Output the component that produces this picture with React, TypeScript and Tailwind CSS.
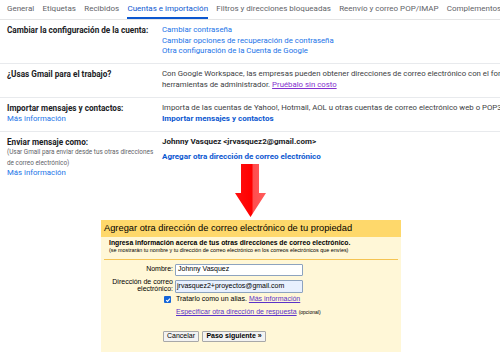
import * as React from 'react'

const tabs = [
  'General',
  'Etiquetas',
  'Recibidos',
  'Cuentas e importación',
  'Filtros y direcciones bloqueadas',
  'Reenvío y correo POP/IMAP',
  'Complementos',
]

function Row({ label, children }: { label: React.ReactNode; children: React.ReactNode }) {
  return (
    <div className="flex border-b border-[#e8eaed] pt-[5px] pb-[6.5px] leading-[10.6px]">
      <div className="w-[162px] shrink-0 pl-[7px]">{label}</div>
      <div className="min-w-0 flex-1 whitespace-nowrap">{children}</div>
    </div>
  )
}

function DownArrow() {
  return (
    <svg width="31" height="53" viewBox="0 0 31 53">
      <defs>
        <linearGradient id="arrowFill" x1="0" y1="0" x2="1" y2="0">
          <stop offset="0" stopColor="#ff1010" />
          <stop offset="0.55" stopColor="#ff0000" />
          <stop offset="0.58" stopColor="#ff4d4d" />
          <stop offset="1" stopColor="#ff5c5c" />
        </linearGradient>
      </defs>
      <path d="M6 0 H24 V29 H31 L15.5 53 L0 29 H6 Z" fill="url(#arrowFill)" />
    </svg>
  )
}

function CheckedBox() {
  return (
    <span className="flex h-[7px] w-[7px] items-center justify-center rounded-[1px] bg-[#1565d8]">
      <svg width="6" height="6" viewBox="0 0 10 10">
        <path d="M2 5.2 L4.2 7.4 L8.2 2.8" fill="none" stroke="#fff" strokeWidth="1.8" />
      </svg>
    </span>
  )
}

export default function App() {
  return (
    <div className="h-[360px] w-[500px] overflow-hidden bg-white">
      {/* gmail settings */}
      <div className="font-['Roboto',Arial,sans-serif] text-[7.8px] text-[#202124]">
        <div className="flex h-[20px] items-stretch gap-[8.3px] border-b border-[#e5e5e5] pl-[7px] whitespace-nowrap">
          {tabs.map((t) => (
            <div
              key={t}
              className={
                t === 'Cuentas e importación'
                  ? 'flex items-center border-b-2 border-[#0b57d0] pt-[1px] text-[8px] text-[#0b57d0]'
                  : 'flex items-center pb-[1px] text-[8px] text-[#5f6368]'
              }
            >
              {t}
            </div>
          ))}
        </div>

        <Row label={<span className="text-[8.2px] font-bold">Cambiar la configuración de la cuenta:</span>}>
          <div className="text-[#1a73e8]">Cambiar contraseña</div>
          <div className="text-[#1a73e8]">Cambiar opciones de recuperación de contraseña</div>
          <div className="text-[#1a73e8]">Otra configuración de la Cuenta de Google</div>
        </Row>

        <Row label={<span className="text-[8.2px] font-bold">¿Usas Gmail para el trabajo?</span>}>
          <div className="text-[#3c4043]">
            Con Google Workspace, las empresas pueden obtener direcciones de correo electrónico con el formato
          </div>
          <div className="text-[#3c4043]">
            herramientas de administrador.{' '}
            <span className="text-[#8430ce] underline">Pruébalo sin costo</span>
          </div>
        </Row>

        <Row
          label={
            <>
              <div className="text-[8.2px] font-bold">Importar mensajes y contactos:</div>
              <div className="text-[#1a73e8]">Más información</div>
            </>
          }
        >
          <div className="text-[#3c4043]">
            Importa de las cuentas de Yahoo!, Hotmail, AOL u otras cuentas de correo electrónico web o POP3.
          </div>
          <div className="text-[8px] font-bold text-[#0b57d0]">Importar mensajes y contactos</div>
        </Row>

        <div className="flex pt-[5px] leading-[10.6px]">
          <div className="w-[162px] shrink-0 pl-[7px]">
            <div className="text-[8.2px] font-bold">Enviar mensaje como:</div>
            <div className="text-[6.4px] text-[#5f6368] whitespace-nowrap">(Usar Gmail para enviar desde tus otras direcciones</div>
            <div className="text-[6.4px] text-[#5f6368]">de correo electrónico)</div>
            <div className="text-[#1a73e8]">Más información</div>
          </div>
          <div className="min-w-0 flex-1 whitespace-nowrap text-[8px]">
            <div className="font-bold">Johnny Vasquez &lt;jrvasquez2@gmail.com&gt;</div>
            <div className="mt-[5px] font-bold text-[#0b57d0]">Agregar otra dirección de correo electrónico</div>
          </div>
        </div>
      </div>

      {/* annotation arrow */}
      <div className="relative h-[41px]">
        <div className="absolute left-[235px] top-[-15px]">
          <DownArrow />
        </div>
      </div>

      {/* dialog */}
      <div className="ml-[101px] w-[300px] bg-[#fff7d7] pb-[10px] font-['Liberation_Sans',Arial,sans-serif] text-black">
        <div className="h-[17px] bg-[#fed86b] pl-[3px] text-[9.3px] leading-[17px] whitespace-nowrap">
          Agregar otra dirección de correo electrónico de tu propiedad
        </div>
        <div className="px-[3px]">
          <div className="pl-[5px] pt-[2px] whitespace-nowrap">
            <div className="text-[6.8px] font-bold leading-[8px]">
              Ingresa información acerca de tus otras direcciones de correo electrónico.
            </div>
            <div className="text-[5.4px] leading-[6px]">
              (se mostrarán tu nombre y tu dirección de correo electrónico en los correos electrónicos que envíes)
            </div>
          </div>
          <div className="mt-[5.5px] h-px bg-[#f5c452]" />
        </div>

        <div className="mt-[4px] grid grid-cols-[72px_128px] gap-x-[2px] text-[7px]">
          <div className="flex items-center justify-end">Nombre:</div>
          <div className="flex h-[12px] items-center rounded-[1px] border border-[#8da3bf] bg-white pl-[2px]">
            Johnny Vasquez
          </div>

          <div className="mt-[-3px] flex flex-col items-end justify-center pt-[4px] leading-[7px]">
            <div>Dirección de correo</div>
            <div>electrónico:</div>
          </div>
          <div className="mt-[4px] flex h-[13px] items-center rounded-[1px] border border-[#8da3bf] bg-[#e8f0fe] pl-[1px]">
            jrvasquez2+proyectos@gmail.com
          </div>

          <div className="mt-[2px] flex h-[10px] items-center justify-end pr-[2px]">
            <CheckedBox />
          </div>
          <div className="mt-[2px] flex h-[10px] items-center whitespace-nowrap pl-[1px]">
            Tratarlo como un alias.&nbsp;
            <span className="text-[#5a32c8] underline">Más información</span>
          </div>

          <div />
          <div className="mt-[3px] flex h-[10px] items-center whitespace-nowrap pl-[1px]">
            <span className="text-[#5a32c8] underline">Especificar otra dirección de respuesta</span>
            <span className="ml-[2px] text-[5px]">(opcional)</span>
          </div>
        </div>

        <div className="mt-[13px] flex gap-[3px] pl-[62px] text-[7px]">
          <div className="flex h-[11px] w-[36px] items-center justify-center rounded-[1px] border border-[#a8a8a8] bg-[#f2f2f2]">
            Cancelar
          </div>
          <div className="flex h-[11px] w-[64px] items-center justify-center rounded-[1px] border border-[#a8a8a8] bg-[#f2f2f2] font-bold">
            Paso siguiente »
          </div>
        </div>
      </div>
    </div>
  )
}
